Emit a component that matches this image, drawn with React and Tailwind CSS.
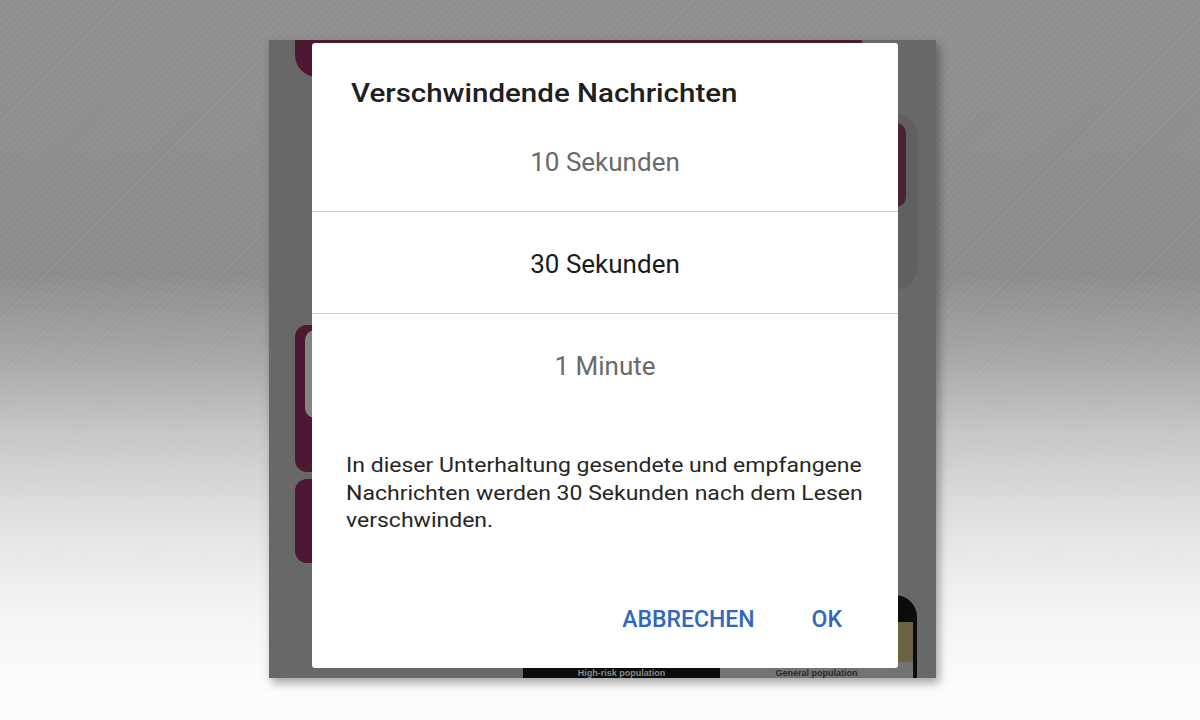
const maroon = 'bg-[#4c1832]';

const options = [
    { label: '10 Sekunden', selected: false },
    { label: '30 Sekunden', selected: true },
    { label: '1 Minute', selected: false },
];

const Dialog = () => {
    return (
        <div className="absolute left-[43px] top-[3px] w-[586px] h-[625px] bg-white rounded-[3px] flex flex-col">
            <h2 className="mt-[35px] ml-[39px] text-[25px] leading-[32px] font-medium text-[#202020] origin-left scale-x-[1.18]">
                Verschwindende Nachrichten
            </h2>
            <div className="flex flex-col">
                {options.map((opt, i) => (
                    <div key={opt.label} className="flex flex-col">
                        {i > 0 && <div className="h-px bg-[#c8cbe2]" />}
                        <div
                            className={
                                opt.selected
                                    ? 'h-[101px] pt-[4px] flex items-center justify-center text-[26px] text-[#1c1c1c]'
                                    : 'h-[101px] pt-[4px] flex items-center justify-center text-[26px] text-[#6a6a6a]'
                            }
                        >
                            {opt.label}
                        </div>
                    </div>
                ))}
            </div>
            <p className="mt-[37px] ml-[34px] text-[19.5px] leading-[27.5px] text-[#262626] whitespace-nowrap origin-left scale-x-[1.18]">
                In dieser Unterhaltung gesendete und empfangene
                <br />
                Nachrichten werden 30 Sekunden nach dem Lesen
                <br />
                verschwinden.
            </p>
            <div className="mt-auto mb-[34px] flex justify-end items-center gap-[57px] pr-[56px] text-[23px] leading-[28px] font-medium text-[#3267be]">
                <button type="button">ABBRECHEN</button>
                <button type="button">OK</button>
            </div>
        </div>
    );
};

const App = () => {
    return (
        <div className="w-full h-[720px] pl-[269px] pt-[40px] font-['Roboto',sans-serif] bg-[image:repeating-linear-gradient(135deg,rgba(255,255,255,0.035)_0px,rgba(255,255,255,0.035)_2px,transparent_2px,transparent_5px),linear-gradient(180deg,#8f8f8f_0%,#8c8c8c_38%,#a8a8a8_50%,#c6c6c6_60%,#dcdcdc_70%,#eaeaea_78%,#f5f5f5_86%,#fcfcfc_96%)]">
            <div className="relative w-[667px] h-[638px] bg-[#686868] overflow-hidden flex flex-col shadow-[3px_5px_9px_rgba(0,0,0,0.35)]">
                {/* dimmed app content behind the dialog */}
                <div className={`ml-[26px] w-[567px] h-[37px] ${maroon} rounded-b-[22px]`} />
                <div className="mt-[36px] flex justify-end pr-[19px]">
                    <div className="w-[300px] h-[177px] bg-[#606060] rounded-[22px] pt-[10px] flex justify-end pr-[11px]">
                        <div className="w-[200px] h-[84px] bg-[#472536] rounded-r-[10px]" />
                    </div>
                </div>
                <div className={`mt-[35px] ml-[26px] w-[260px] h-[147px] ${maroon} rounded-[12px] pt-[5px] pl-[10px]`}>
                    <div className="h-[88px] bg-[#848484] rounded-l-[10px]" />
                </div>
                <div className={`mt-[7px] ml-[26px] w-[260px] h-[84px] ${maroon} rounded-[12px]`} />
                <div className="mt-[32px] ml-[254px] w-[394px] h-[83px] flex">
                    <div className="w-[197px] bg-[#0c0c0c] flex items-end justify-center">
                        <span className="text-[9px] leading-[10px] font-bold text-[#8a8a8a] font-['Liberation_Sans',sans-serif]">
                            High-risk population
                        </span>
                    </div>
                    <div className="flex-1 bg-[#0c0c0c] rounded-tr-[22px] pr-[4px] flex flex-col">
                        <div className="mt-[27px] h-[40px] bg-[#6b6344]" />
                        <div className="flex-1 bg-[#737373] flex items-end justify-center">
                            <span className="text-[9px] leading-[10px] font-bold text-[#2a2a2a] font-['Liberation_Sans',sans-serif]">
                                General population
                            </span>
                        </div>
                    </div>
                </div>
                <Dialog />
            </div>
        </div>
    );
};

export default App;
